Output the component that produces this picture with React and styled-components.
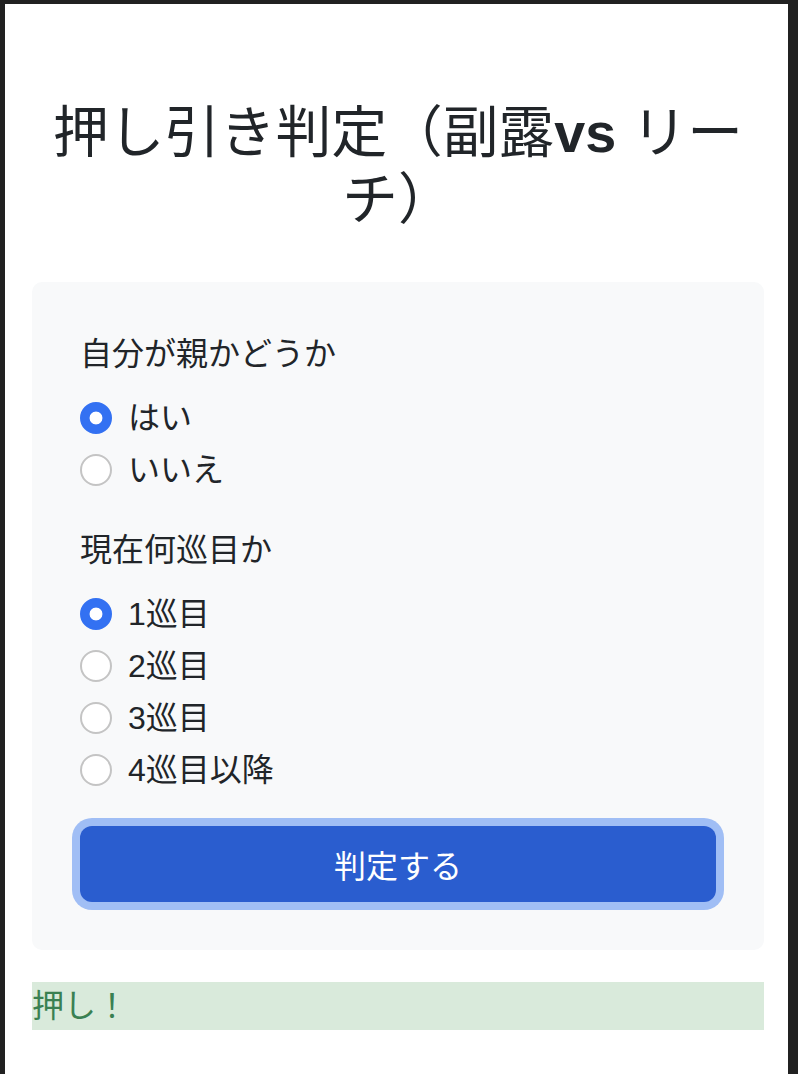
import React, { useState } from 'react';
import styled, { createGlobalStyle } from 'styled-components';

const GlobalStyle = createGlobalStyle`
  html, body {
    margin: 0;
    background: #212121;
  }
  body {
    font-family: "Liberation Sans", "Noto Sans CJK JP", sans-serif;
    color: #212529;
  }
`

const Page = styled.div`
  margin: 4px 10px 0 5px;
  min-height: calc(100vh - 4px);
  background: #fff;
  padding: 0 24px 0 27px;
  box-sizing: border-box;
  overflow: hidden;
`

const Title = styled.h1`
  margin: 96px 0 48px;
  font-size: 55.7px;
  font-weight: 400;
  line-height: 1.2;
  text-align: center;
  color: #212529;
`

const Latin = styled.span`
  font-weight: 700;
`

const Card = styled.form`
  background: #f8f9fa;
  border-radius: 10px;
  padding: 48px;
`

const Group = styled.div`
  margin-bottom: 32px;
`

const GroupLabel = styled.div`
  margin-bottom: 16px;
  font-size: 32px;
  line-height: 48px;
`

const Option = styled.label`
  display: flex;
  align-items: center;
  gap: 16px;
  font-size: 32px;
  line-height: 48px;
  margin-bottom: 4px;
  cursor: pointer;

  &:last-child {
    margin-bottom: 0;
  }
`

const Radio = styled.input`
  appearance: none;
  margin: 0;
  width: 32px;
  height: 32px;
  flex-shrink: 0;
  border-radius: 50%;
  border: 2px solid #c4c4c4;
  background: #fff;
  box-sizing: border-box;

  &:checked {
    border-color: #3371f2;
    background: radial-gradient(circle, #fff 6px, #3371f2 6.8px);
  }
`

const SubmitButton = styled.button`
  display: block;
  width: 100%;
  height: 76px;
  border: none;
  border-radius: 12px;
  background: #2a5dcf;
  color: #fff;
  font-family: inherit;
  font-size: 32px;
  box-shadow: 0 0 0 8px #a0bef5;
  cursor: pointer;
`

const Result = styled.div`
  margin-top: 32px;
  background: #d9eadb;
  color: #3a8052;
  font-size: 32px;
  line-height: 48px;
`

const RadioGroup = ({ label, name, options, value, onChange }) => (
  <Group>
    <GroupLabel>{label}</GroupLabel>
    {options.map(o => (
      <Option key={o}>
        <Radio type="radio" name={name} checked={value === o} onChange={() => onChange(o)} />
        {o}
      </Option>
    ))}
  </Group>
)

const App = () => {
  const [ dealer, setDealer ] = useState('はい');
  const [ turn, setTurn ] = useState('1巡目');

  return (
    <>
      <GlobalStyle />
      <Page>
        <Title>押し引き判定（副露<Latin>vs</Latin> リーチ）</Title>
        <Card onSubmit={e => e.preventDefault()}>
          <RadioGroup
            label="自分が親かどうか"
            name="dealer"
            options={['はい', 'いいえ']}
            value={dealer}
            onChange={setDealer}
          />
          <RadioGroup
            label="現在何巡目か"
            name="turn"
            options={['1巡目', '2巡目', '3巡目', '4巡目以降']}
            value={turn}
            onChange={setTurn}
          />
          <SubmitButton type="submit">判定する</SubmitButton>
        </Card>
        <Result>押し！</Result>
      </Page>
    </>
  )
}

export default App;
